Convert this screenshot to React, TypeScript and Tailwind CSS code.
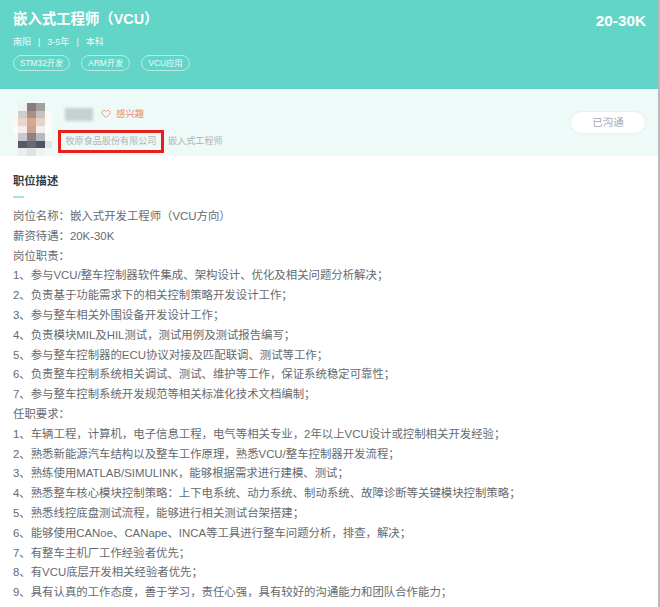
const font = "font-['Liberation_Sans','Noto_Sans_CJK_SC',sans-serif]";

const lines = [
  "岗位名称：嵌入式开发工程师（VCU方向）",
  "薪资待遇：20K-30K",
  "岗位职责：",
  "1、参与VCU/整车控制器软件集成、架构设计、优化及相关问题分析解决；",
  "2、负责基于功能需求下的相关控制策略开发设计工作；",
  "3、参与整车相关外围设备开发设计工作；",
  "4、负责模块MIL及HIL测试，测试用例及测试报告编写；",
  "5、参与整车控制器的ECU协议对接及匹配联调、测试等工作；",
  "6、负责整车控制系统相关调试、测试、维护等工作，保证系统稳定可靠性；",
  "7、参与整车控制系统开发规范等相关标准化技术文档编制；",
  "任职要求：",
  "1、车辆工程，计算机，电子信息工程，电气等相关专业，2年以上VCU设计或控制相关开发经验；",
  "2、熟悉新能源汽车结构以及整车工作原理，熟悉VCU/整车控制器开发流程；",
  "3、熟练使用MATLAB/SIMULINK，能够根据需求进行建模、测试；",
  "4、熟悉整车核心模块控制策略：上下电系统、动力系统、制动系统、故障诊断等关键模块控制策略；",
  "5、熟悉线控底盘测试流程，能够进行相关测试台架搭建；",
  "6、能够使用CANoe、CANape、INCA等工具进行整车问题分析，排查，解决；",
  "7、有整车主机厂工作经验者优先；",
  "8、有VCU底层开发相关经验者优先；",
  "9、具有认真的工作态度，善于学习，责任心强，具有较好的沟通能力和团队合作能力；",
];

const tags = ["STM32开发", "ARM开发", "VCU应用"];

// mosaic over the face, row by row (pale edge, three cells, pale edge)
const avatar = [
  "bg-[#eefaf8]", "bg-[#f0f2f1]", "bg-[#8a7d79]", "bg-[#a89e9b]", "bg-[#eefaf8]",
  "bg-[#f6f8f8]", "bg-[#cfcecd]", "bg-[#a89288]", "bg-[#c9c1bd]", "bg-[#fafcfc]",
  "bg-[#fbf7f7]", "bg-[#ecd3cb]", "bg-[#d6a98f]", "bg-[#e6d2ca]", "bg-[#fcfafa]",
  "bg-[#fdfbfb]", "bg-[#f5eceb]", "bg-[#c9a493]", "bg-[#f5eeee]", "bg-[#fdfdfd]",
  "bg-[#f6f8f8]", "bg-[#c9c9cd]", "bg-[#8c8280]", "bg-[#b9babd]", "bg-[#f8fafa]",
  "bg-[#eefaf8]", "bg-[#565967]", "bg-[#6b6670]", "bg-[#4f5368]", "bg-[#dfe6e6]",
  "bg-[#eefaf8]", "bg-[#e9eeee]", "bg-[#dde2e3]", "bg-[#eef3f3]", "bg-[#eefaf8]",
];

function Header() {
  return (
    <div className="h-[89px] bg-[#62d5c8] pl-[13px] pr-[12px] pt-[9px] text-white flex justify-between items-start">
      <div>
        <h1 className="text-[14.4px] leading-[20px] font-bold">嵌入式工程师（VCU）</h1>
        <div className="mt-[6px] flex items-center text-[9px] leading-[14px] text-[#eefbf9]">
          <span>南阳</span>
          <span className="mx-[7px]">|</span>
          <span>3-5年</span>
          <span className="mx-[7px]">|</span>
          <span>本科</span>
        </div>
        <div className="mt-[6px] flex gap-[11px]">
          {tags.map((t) => (
            <span key={t} className="h-[16px] px-[6px] flex items-center rounded-full border border-[#b5ebe4] text-[8.3px] text-[#eefbf9]">
              {t}
            </span>
          ))}
        </div>
      </div>
      <div className="text-[15.3px] leading-[24px] font-bold">20-30K</div>
    </div>
  );
}

function Contact() {
  return (
    <div className="h-[67px] bg-[#eefaf8] pl-[13px] pr-[12px] flex items-start justify-between">
      <div className="flex items-start pt-[14px]">
        <div className="w-[39px] grid grid-cols-[5px_9px_9px_9px_7px] blur-[0.7px]">
          {avatar.map((c, i) => (
            <div key={i} className={`h-[7.5px] ${c}`} />
          ))}
        </div>
        <div className="ml-[6px]">
          <div className="flex items-center h-[20px] pl-[7px] mt-[1px]">
            <div className="w-[28px] h-[13px] bg-[#c6cfd1] blur-[1.5px]" />
            <svg className="ml-[8px] w-[10px] h-[10px]" viewBox="0 0 24 24" fill="none" stroke="#eda27f" strokeWidth="2.4">
              <path d="M12 21 3.5 12.2a5.2 5.2 0 0 1 0-7.3 5.1 5.1 0 0 1 7.2 0L12 6.2l1.3-1.3a5.1 5.1 0 0 1 7.2 0 5.2 5.2 0 0 1 0 7.3Z" />
            </svg>
            <span className="ml-[5px] text-[9.4px] text-[#ec8a6c]">感兴趣</span>
          </div>
          <div className="mt-[6px] flex items-center">
            <span className="h-[23px] w-[106px] flex items-center justify-center border-[3px] border-[#e8201c] text-[9.1px] text-[#adb3b5]">
              牧原食品股份有限公司
            </span>
            <span className="ml-[4px] text-[9.1px] text-[#adb3b5]">嵌入式工程师</span>
          </div>
        </div>
      </div>
      <button className="w-[76px] h-[23px] mt-[22px] rounded-full bg-white border border-[#e8f0ef] text-[10.5px] text-[#a8a8ae]">
        已沟通
      </button>
    </div>
  );
}

export default function App() {
  return (
    <div className={`${font} w-[660px] h-[607px] overflow-hidden bg-white border-r-2 border-[#b8bcbc]`}>
      <Header />
      <Contact />
      <div className="pl-[13px] pr-[10px] pt-[17px]">
        <h2 className="text-[11.3px] leading-[16px] font-bold text-[#333c47]">职位描述</h2>
        <div className="mt-[7px] w-[11px] h-[2px] bg-[#a5e5dc]" />
        <div className="mt-[9px] text-[11.4px] leading-[19.8px] text-[#666a6e] whitespace-nowrap">
          {lines.map((l) => (
            <div key={l}>{l}</div>
          ))}
        </div>
      </div>
    </div>
  );
}
